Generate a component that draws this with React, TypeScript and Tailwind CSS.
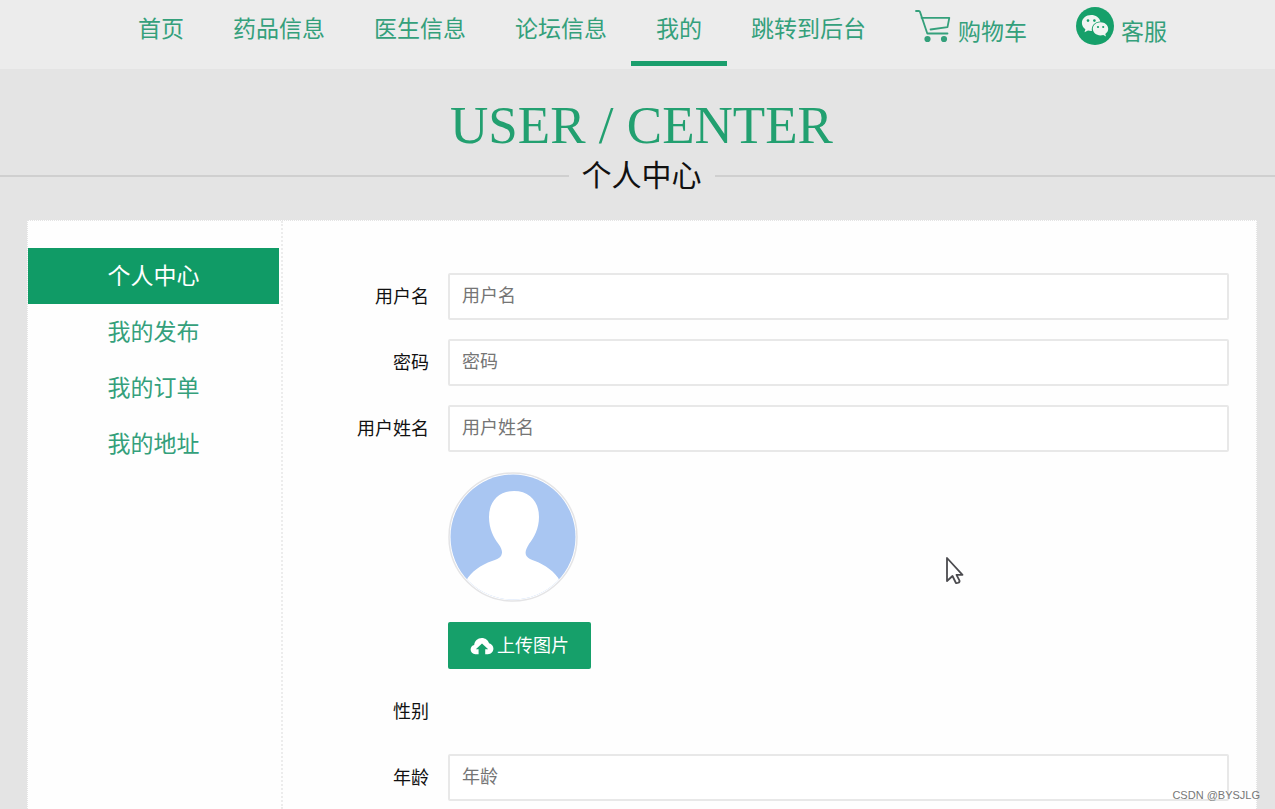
import type { ReactNode } from "react";

type NavItem = { label: string; active?: boolean; icon?: ReactNode };

function CartIcon() {
  return (
    <svg width="36" height="34" viewBox="0 0 36 34" fill="none" stroke="#34a07b" strokeWidth="1.8" strokeLinecap="round" strokeLinejoin="round" aria-hidden="true">
      <path d="M1 2h2.800c.6 0 1 .3 1.200.9L12.300 24.500H32.500" />
      <path d="M6.500 8.800H34.300L32.500 18.200L15.500 20.500" />
      <circle cx="12.500" cy="30" r="2.200" fill="#34a07b" />
      <circle cx="29" cy="30" r="2.200" fill="#34a07b" />
    </svg>
  );
}

function WechatIcon() {
  return (
    <svg width="38" height="38" viewBox="0 0 38 38" aria-hidden="true">
      <circle cx="19" cy="19" r="19" fill="#16a06a" />
      <path d="M15.200 8C10 8 5.900 11.500 5.900 16c0 2.600 1.300 4.700 3.500 6.200L8.500 25.300l3.500-1.800c1.300.3 2.500.5 3.900.4-.9-5.100 3-9.500 8.500-9.500C23.400 10.600 19.700 8 15.200 8Z" fill="#f1f5f2" />
      <path d="M24.500 15.300c-4.300 0-7.700 2.900-7.700 6.500s3.400 6.600 7.700 6.600c1 0 1.900-.2 2.800-.4l2.700 1.500-.7-2.600c1.800-1.200 2.900-3 2.900-5.100 0-3.600-3.400-6.500-7.700-6.500Z" fill="#f1f5f2" />
      <g fill="#16a06a">
        <circle cx="12" cy="13.600" r="1.300" />
        <circle cx="18.400" cy="13.600" r="1.300" />
        <circle cx="22" cy="20" r="1.100" />
        <circle cx="27.200" cy="20" r="1.100" />
      </g>
    </svg>
  );
}

function CloudUploadIcon() {
  return (
    <svg width="24" height="18" viewBox="0 0 24 18" aria-hidden="true">
      <path d="M8.600 17.200H5.400C2.600 17.200.6 15.200.6 12.600c0-2.200 1.500-4 3.600-4.500C4.500 4 7.700 1 11.800 1c3.500 0 6.300 2.100 7.300 5.300 2.500.6 4.300 2.700 4.300 5.300 0 3.100-2.400 5.600-5.500 5.600h-2.700v-5h3L12 6.400l-6.200 5.800h2.800Z" fill="#fff" />
    </svg>
  );
}

function Avatar() {
  return (
    <svg width="130" height="130" viewBox="0 0 130 130" role="img" aria-label="头像">
      <defs>
        <clipPath id="avatar-clip">
          <circle cx="65" cy="65" r="62.500" />
        </clipPath>
      </defs>
      <circle cx="65" cy="65" r="64" fill="#fff" stroke="#e4e4e6" strokeWidth="1.500" />
      <g clipPath="url(#avatar-clip)">
        <rect width="130" height="130" fill="#a9c6f2" />
        <path d="M66 19C50.500 19 41 29.500 41 45c0 12 4.500 20.500 9.500 27 3.500 5 4.500 8.500 2.500 12-2 3-5 3.500-9 5C33 93 23 99.500 18 109v21h94v-21C107 99.500 97 93 87 89c-4-1.500-6.500-2.500-8.500-5-2-3.500-.5-7 2.500-12 5-6.500 10-15 10-27C91 29.500 81.500 19 66 19Z" fill="#fff" />
      </g>
    </svg>
  );
}

function Pointer() {
  return (
    <svg className="pointer-events-none absolute left-[945px] top-[556px]" width="20" height="30" viewBox="0 0 20 30" fill="#fff" stroke="#4b4b4f" strokeWidth="1.800" strokeLinejoin="round" aria-hidden="true">
      <path d="M2 2v23l5.500-5 3.200 6.500c.8 1.600 4.600-.2 3.800-1.800L11.500 18.800H17.500Z" />
    </svg>
  );
}

const navItems: NavItem[] = [
  { label: "首页" },
  { label: "药品信息" },
  { label: "医生信息" },
  { label: "论坛信息" },
  { label: "我的", active: true },
  { label: "跳转到后台" },
  { label: "购物车", icon: <CartIcon /> },
  { label: "客服", icon: <WechatIcon /> },
];

const menuItems = ["个人中心", "我的发布", "我的订单", "我的地址"];

function Row({ label, htmlFor, children }: { label?: string; htmlFor?: string; children?: ReactNode }) {
  return (
    <div className="flex min-h-[47px]">
      <div className="flex h-[47px] w-[165px] shrink-0 items-center justify-end pr-[19px] text-lg leading-none text-[#111]">
        {label && <label htmlFor={htmlFor}>{label}</label>}
      </div>
      <div className="min-w-0 flex-1">{children}</div>
    </div>
  );
}

function Field({ id, label, type = "text" }: { id: string; label: string; type?: string }) {
  return (
    <Row label={label} htmlFor={id}>
      <input
        id={id}
        type={type}
        placeholder={label}
        className="block h-[47px] w-full rounded-xs border-2 border-[#e8e8e8] bg-white px-3 text-lg leading-none text-[#333] outline-none placeholder:text-[#757575]"
      />
    </Row>
  );
}

export default function App() {
  return (
    <div className="relative flex min-h-screen flex-col bg-[#e4e4e4] font-['Liberation_Sans','Noto_Sans_CJK_SC',sans-serif]">
      <header className="h-[69px] bg-[#ececec]">
        <nav aria-label="主导航">
          <ul className="flex h-[66px] justify-center gap-[49px] pl-[30px] text-[23px] leading-none text-[#34a07b]">
            {navItems.map((item) => (
              <li key={item.label} className="relative shrink-0">
                <a href="#" className={item.icon ? "flex h-16 items-center gap-[7px] whitespace-nowrap" : "flex h-[58px] items-center whitespace-nowrap"}>
                  {item.icon && <span className="pb-3">{item.icon}</span>}
                  {item.label}
                </a>
                {item.active && <span className="absolute -inset-x-[25px] bottom-0 h-[5px] bg-[#1b9f6d]" />}
              </li>
            ))}
          </ul>
        </nav>
      </header>

      <section className="pt-7">
        <p className="pl-2 text-center font-['Liberation_Serif',serif] text-[53px] leading-[56px] text-[#22a070]">USER / CENTER</p>
        <div className="flex items-center">
          <span className="h-[2px] grow basis-2 bg-[#cfcfcf]" />
          <h1 className="px-[13px] text-3xl leading-[46px] text-[#111]">个人中心</h1>
          <span className="h-[2px] grow basis-0 bg-[#cfcfcf]" />
        </div>
      </section>

      <main className="ml-[27px] mr-[18px] mt-[21px] flex flex-1 border border-b-0 border-dotted border-[#e4e4e4] bg-[#fefefe]">
        <aside className="w-[255px] shrink-0 border-r-2 border-dotted border-[#ececec] pr-[2px] pt-[27px]">
          <ul className="text-[23px] leading-none">
            {menuItems.map((label, i) => (
              <li key={label}>
                <a href="#" className={i === 0 ? "flex h-14 items-center justify-center bg-[#109b66] text-white" : "flex h-14 items-center justify-center text-[#34a07b]"}>
                  {label}
                </a>
              </li>
            ))}
          </ul>
        </aside>

        <form className="flex min-w-0 flex-1 flex-col gap-[19px] pb-2 pr-[27px] pt-[52px]">
          <Field id="username" label="用户名" />
          <Field id="password" label="密码" type="password" />
          <Field id="fullname" label="用户姓名" />
          <Row>
            <div className="py-px [&>svg]:block">
              <Avatar />
            </div>
          </Row>
          <Row>
            <button type="button" className="flex h-[47px] items-center justify-center gap-[3px] rounded-xs bg-[#16a06a] px-[22px] text-lg leading-none text-white">
              <CloudUploadIcon />
              上传图片
            </button>
          </Row>
          <Row label="性别" />
          <Field id="age" label="年龄" />
        </form>
      </main>

      <Pointer />
      <span className="absolute bottom-1.5 right-[15px] font-['Liberation_Sans',sans-serif] text-[11px] leading-4 text-[#777]">CSDN @BYSJLG</span>
    </div>
  );
}
